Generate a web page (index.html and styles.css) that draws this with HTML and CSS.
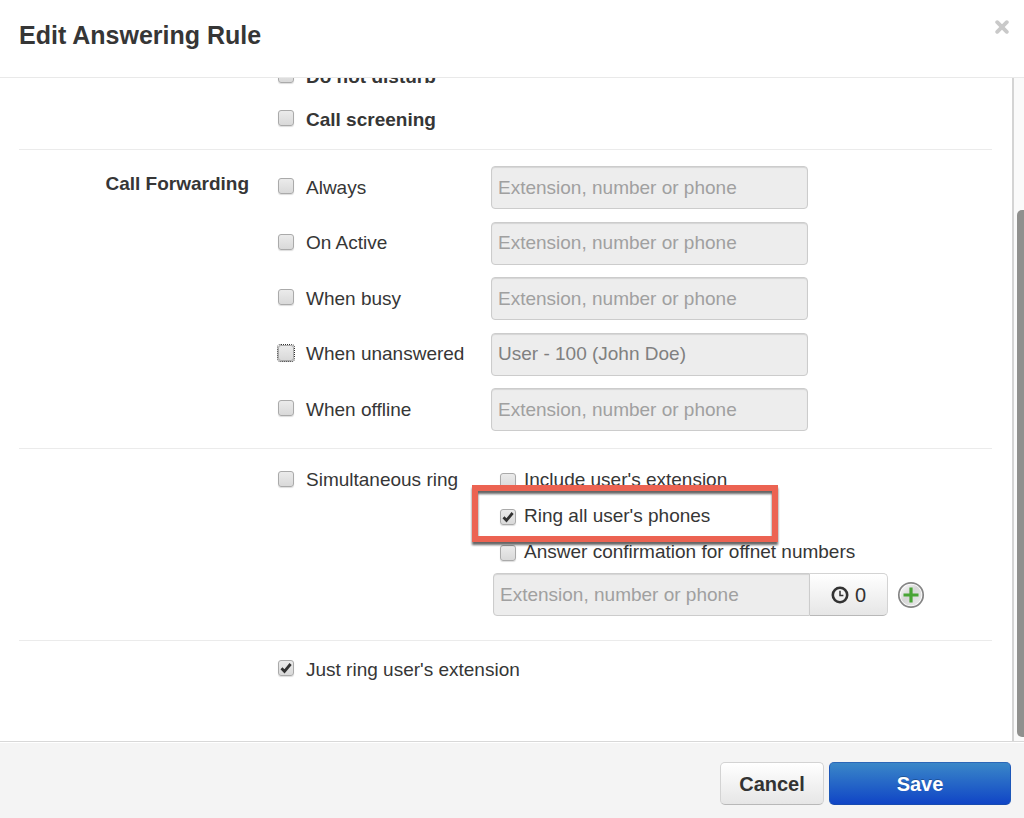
FILE: index.html
```html
<!DOCTYPE html>
<html lang="en">
<head>
<meta charset="utf-8">
<title>Edit Answering Rule</title>
<link rel="stylesheet" href="styles.css">
</head>
<body>
<form class="dialog">
  <header class="dialog-header">
    <h1 class="dialog-title">Edit Answering Rule</h1>
    <button class="close" type="button" aria-label="Close">
      <svg width="14" height="14" viewBox="0 0 14 14"><path d="M2.2 2.2 11.8 11.8M11.8 2.2 2.2 11.8" stroke="#c9c9c9" stroke-width="3.8" stroke-linecap="round"/></svg>
    </button>
  </header>

  <div class="dialog-body">
    <main class="pane">
      <section class="section general">
        <label class="option strong"><input class="check" type="checkbox">Do not disturb</label>
        <label class="option strong"><input class="check" type="checkbox">Call screening</label>
      </section>

      <section class="section forwarding">
        <h2 class="section-label">Call Forwarding</h2>
        <div class="forward-list">
          <div class="forward-row">
            <label class="option"><input class="check" type="checkbox">Always</label>
            <input class="field" type="text" placeholder="Extension, number or phone" aria-label="Always forward to" disabled>
          </div>
          <div class="forward-row">
            <label class="option"><input class="check" type="checkbox">On Active</label>
            <input class="field" type="text" placeholder="Extension, number or phone" aria-label="On active forward to" disabled>
          </div>
          <div class="forward-row">
            <label class="option"><input class="check" type="checkbox">When busy</label>
            <input class="field" type="text" placeholder="Extension, number or phone" aria-label="When busy forward to" disabled>
          </div>
          <div class="forward-row">
            <label class="option"><input class="check focused" type="checkbox">When unanswered</label>
            <input class="field" type="text" value="User - 100 (John Doe)" aria-label="When unanswered forward to" disabled>
          </div>
          <div class="forward-row">
            <label class="option"><input class="check" type="checkbox">When offline</label>
            <input class="field" type="text" placeholder="Extension, number or phone" aria-label="When offline forward to" disabled>
          </div>
        </div>
      </section>

      <section class="section simring">
        <label class="option"><input class="check" type="checkbox">Simultaneous ring</label>
        <div class="ring-options">
          <label class="suboption"><input class="check" type="checkbox">Include user's extension</label>
          <label class="suboption highlighted"><input class="check" type="checkbox" checked>Ring all user's phones</label>
          <label class="suboption"><input class="check" type="checkbox">Answer confirmation for offnet numbers</label>
          <div class="ring-target">
            <input class="field joined" type="text" placeholder="Extension, number or phone" aria-label="Simultaneous ring number" disabled>
            <button class="button delay" type="button" aria-label="Ring delay 0">
              <svg width="18" height="18" viewBox="0 0 18 18" fill="none" stroke="#333"><circle cx="9" cy="9" r="7.2" stroke-width="2.6"/><path d="M9 4.8V9.6H12.4" stroke-width="1.5"/></svg>
              0
            </button>
            <button class="add" type="button" aria-label="Add number">
              <svg width="28" height="28" viewBox="0 0 28 28"><defs><linearGradient id="disc" x1="0" y1="0" x2="1" y2="1"><stop offset="0" stop-color="#fff"/><stop offset=".45" stop-color="#d6d6d6"/><stop offset="1" stop-color="#eee"/></linearGradient></defs><circle cx="14" cy="14" r="12.2" fill="#fff" stroke="#858585" stroke-width="1.7"/><circle cx="14" cy="14" r="10.6" fill="url(#disc)"/><path d="M14 6.5V21.5M6.5 14H21.5" stroke="#49a536" stroke-width="3.2"/></svg>
            </button>
          </div>
        </div>
      </section>

      <section class="section last">
        <label class="option"><input class="check" type="checkbox" checked>Just ring user's extension</label>
      </section>
    </main>
    <div class="track" aria-hidden="true"><div class="thumb"></div></div>
  </div>

  <footer class="dialog-footer">
    <button class="button cancel" type="button">Cancel</button>
    <button class="button save" type="submit">Save</button>
  </footer>
</form>
</body>
</html>
```
FILE: styles.css
```css
*,
*::before,
*::after {
  box-sizing: border-box;
}

body {
  margin: 0;
  background: #fff;
  color: #363636;
  font: 19px/24px "Liberation Sans", Arial, sans-serif;
}

.dialog {
  display: flex;
  flex-direction: column;
  height: 100vh;
  margin: 0;
}

.dialog-header {
  display: flex;
  justify-content: space-between;
  align-items: flex-start;
  padding: 19px 14px 25px 19px;
  border-bottom: 1px solid #e9e9e9;
}

.dialog-title {
  margin: 0;
  font-size: 25px;
  line-height: 33px;
}

.close,
.add {
  display: flex;
  padding: 0;
  border: 0;
  background: none;
}

.close {
  padding: 1px;
}

.dialog-body {
  display: flex;
  flex: 1;
  min-height: 0;
  overflow: hidden;
}

.pane {
  flex: 1;
  padding: 0 20px 0 19px;
}

.track {
  width: 12px;
  padding: 132px 0 4px 3px;
  border-left: 2px solid #d4d4d4;
  background: #fafafa;
}

.thumb {
  height: 100%;
  border-radius: 5px 0 0 5px;
  background: #90908e;
}

.section {
  padding-left: 259px;
  border-bottom: 1px solid #ebebeb;
}

/* The pane is scrolled so that the first row is partly hidden. */
.general {
  margin-top: -23px;
  padding-bottom: 8px;
}

.forwarding {
  display: grid;
  grid-template-columns: 230px 1fr;
  column-gap: 29px;
  padding: 16px 0 17px;
}

.section-label {
  margin: 6px 0 0;
  font-size: 19px;
  line-height: 24px;
  text-align: right;
}

.forward-list {
  display: flex;
  flex-direction: column;
  justify-content: space-between;
  min-height: 265px;
}

.forward-row,
.simring {
  display: grid;
  grid-template-columns: 213px 1fr;
}

.simring {
  padding-top: 13px;
  padding-bottom: 24px;
}

.last {
  padding-top: 7px;
  border-bottom: 0;
}

.option {
  display: flex;
  align-items: center;
  gap: 12px;
  height: 43px;
}

.simring .option {
  height: 36px;
}

.strong {
  font-weight: bold;
}

.suboption {
  display: flex;
  align-items: center;
  gap: 8px;
  height: 36px;
  padding-left: 9px;
}

.highlighted {
  position: relative;
}

.highlighted::after {
  content: "";
  position: absolute;
  top: -13px;
  left: -19px;
  width: 306px;
  height: 57px;
  border: 6px solid #ec6352;
  filter: drop-shadow(0 3px 1px rgba(0, 0, 0, 0.6));
  pointer-events: none;
  z-index: 1;
}

.check {
  appearance: none;
  flex: none;
  width: 16px;
  height: 16px;
  margin: 0;
  border: 1px solid #aaa;
  border-radius: 3px;
  background: linear-gradient(#ebebeb, #d9d9d9);
  box-shadow: 0 1px 1px #ddd;
}

.option .check {
  margin-bottom: 3px;
}

.suboption .check {
  margin-top: 2px;
}

.check:checked {
  background: url("data:image/svg+xml,%3Csvg xmlns='http://www.w3.org/2000/svg' viewBox='0 0 14 14'%3E%3Cpath d='M2.5 7.2 5.5 10.4 11.6 3' fill='none' stroke='%23333' stroke-width='2.8'/%3E%3C/svg%3E") center / 14px 14px no-repeat, linear-gradient(#ebebeb, #d9d9d9);
}

.focused {
  outline: 1px dotted #333;
}

.field {
  width: 317px;
  height: 43px;
  padding: 0 6px;
  border: 1px solid #ccc;
  border-radius: 4px;
  background: #ededed;
  box-shadow: inset 0 1px 1px rgba(0, 0, 0, 0.1);
  color: #808080;
  font: inherit;
}

.field::placeholder {
  color: #a0a0a0;
  opacity: 1;
}

.ring-target {
  display: flex;
  align-items: center;
  padding: 3px 0 0 2px;
}

.joined {
  border-radius: 4px 0 0 4px;
}

.button {
  display: flex;
  justify-content: center;
  align-items: center;
  height: 43px;
  padding: 0 18px;
  border: 1px solid #d3d3d3;
  border-bottom-color: #b8b8b8;
  border-radius: 5px;
  background: linear-gradient(#fff, #e6e6e6);
  color: #333;
  font: inherit;
}

.delay {
  gap: 6px;
  width: 78px;
  border-left: 0;
  border-radius: 0 5px 5px 0;
  font-size: 20px;
}

.add {
  margin-left: 9px;
}

.dialog-footer {
  display: flex;
  justify-content: flex-end;
  gap: 5px;
  padding: 20px 13px 13px;
  border-top: 1px solid #d8d8d8;
  background: #f4f4f4;
  box-shadow: inset 0 1px 0 #fff;
}

.cancel,
.save {
  font-size: 20px;
  font-weight: bold;
}

.cancel {
  width: 104px;
}

.save {
  width: 182px;
  border-color: #2b67b8 #1c57b8 #174bb0;
  background: linear-gradient(#3a87c8, #1045c6);
  color: #fff;
  text-shadow: 0 -1px 0 rgba(0, 0, 0, 0.25);
}
```
